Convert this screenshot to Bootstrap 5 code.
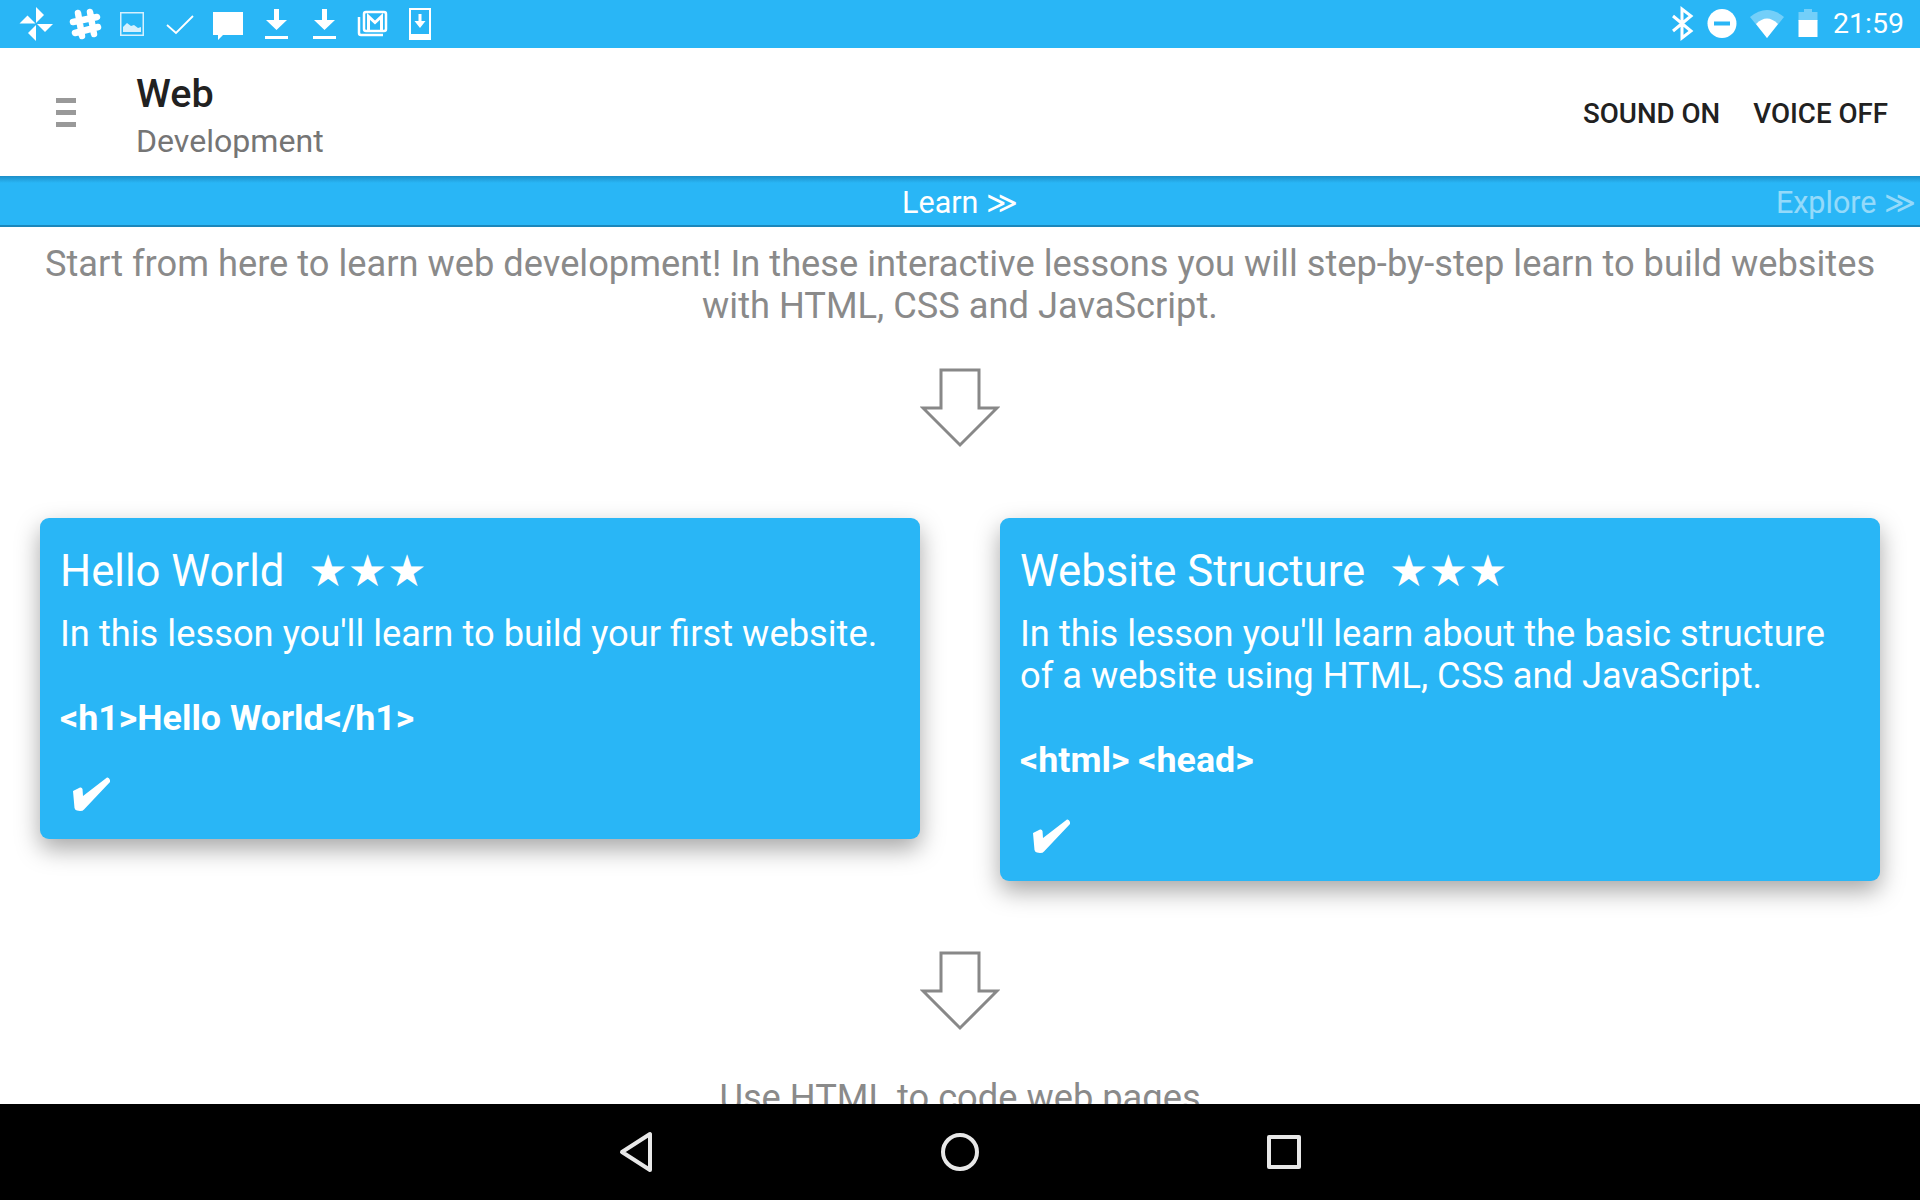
<!DOCTYPE html>
<html lang="en">
<head>
    <meta charset="UTF-8">
    <meta name="viewport" content="width=device-width, initial-scale=1.0">
    <title>Web Development</title>
    <link rel="stylesheet" href="https://cdn.jsdelivr.net/npm/bootstrap@5.3.0/dist/css/bootstrap.min.css">
    <style>
        html, body { height: 100%; overflow: hidden; }
        body { font-family: Roboto, "DejaVu Sans", sans-serif; background: #fff; }
        .app-shell { height: 1200px; }
        .status-bar { height: 48px; background: #29b6f6; color: #fff; padding: 0 16px 0 12px; }
        .status-bar svg { width: 48px; height: 48px; display: block; }
        .status-bar svg.sys-40 { width: 40px; }
        .status-bar svg.sys-50 { width: 50px; }
        .status-bar svg.sys-32 { width: 32px; }
        .status-time { font-size: 28.5px; line-height: 50px; margin-left: 9px; }
        .top-bar { height: 128px; padding: 10px 32px 0 56px; }
        .menu-bars { width: 20px; margin: -10px 60px 0 0; }
        .menu-bars span { display: block; height: 5px; background: #999; margin: 7px 0; }
        .top-title { font-size: 39.6px; font-weight: 500; color: #212121; line-height: 48px; }
        .top-sub { font-size: 32.1px; color: #757575; line-height: 47px; }
        .top-action { font-size: 27.7px; font-weight: 500; color: #212121; margin-left: 33px; margin-top: -7px; }
        .tab-strip { height: 51px; background: linear-gradient(#1e8fc8, #29b6f6 7px); color: #fff; font-size: 30.5px; line-height: 53px; border-bottom: 2px solid #1b87bb; }
        .tab-next { position: absolute; right: 4px; top: 0; opacity: .5; }
        .page-body { overflow: hidden; min-height: 0; }
        .intro-text { font-size: 36.25px; line-height: 42px; color: #8a8a8a; text-align: center; padding: 16px 30px 0; }
        .step-arrow { display: block; width: 80px; height: 80px; margin: 0 auto; }
        .step-arrow.first-arrow { margin-top: 41px; }
        .lesson-row { gap: 80px; padding: 0 40px; margin-top: 70px; margin-bottom: 70px; }
        .lesson-card { flex: 1 1 0; background: #29b6f6; color: #fff; border: 0; border-radius: 9px; padding: 24px 20px 28px; box-shadow: 0 10px 24px rgba(0,0,0,.35); }
        .lesson-title { font-size: 43.7px; line-height: 58px; font-weight: 400; margin: 0; }
        .lesson-stars { font-family: "DejaVu Sans", sans-serif; font-size: 44px; margin-left: 13px; }
        .lesson-text { font-size: 36.3px; line-height: 42px; font-weight: 400; margin: 13px 0 0; }
        .lesson-code { font-size: 35.8px; line-height: 42px; font-weight: 700; margin: 42px 0 0; }
        .lesson-done { display: block; width: 37px; height: 34px; margin: 38px 0 0 13px; }
        .next-step { padding-top: 46px; }
        .nav-strip { height: 96px; background: #000; gap: 254px; }
        .nav-strip svg { width: 70px; height: 70px; display: block; }
    </style>
</head>
<body>

<div class="app-shell d-flex flex-column">
    <div class="status-bar d-flex align-items-center flex-shrink-0">
        <svg viewBox="0 0 48 48" fill="#fff"><path d="M24 7l8 8-8 8zM41 24l-8 8-8-8zM24 41l-8-8 8-8zM7.500 23.500l8-8 8 8z"/></svg>
        <svg viewBox="0 0 48 48" stroke="#fff" stroke-width="6.500" stroke-linecap="round" fill="none"><path d="M18 13l4 23M30 12l4 22M13 22l24-5M15 33l23-6"/></svg>
        <svg viewBox="0 0 48 48" fill="#d6f0fd"><rect x="12.750" y="12.750" width="22.500" height="22.500" fill="none" stroke="#d6f0fd" stroke-width="1.500"/><path d="M15 32v-5l4-4 4 3 3-1 4 3 3-1v5z"/></svg>
        <svg viewBox="0 0 48 48" fill="none" stroke="#fff" stroke-width="1.800"><path d="M11 25l9 8 17-17"/></svg>
        <svg viewBox="0 0 48 48" fill="#fff"><path d="M9 12h30v23H19l-5 5v-5H9z"/></svg>
        <svg viewBox="0 0 48 48" fill="#fff"><path d="M22 9h5v11h8l-10.500 10L14 20h8zM13 36h23v3H13z"/></svg>
        <svg viewBox="0 0 48 48" fill="#fff"><path d="M22 9h5v11h8l-10.500 10L14 20h8zM13 36h23v3H13z"/></svg>
        <svg viewBox="0 0 48 48" fill="none" stroke="#fff" stroke-width="2.500"><rect x="16" y="12" width="22" height="19" rx="2"/><path d="M20.500 30V16.500l6.500 6 6.500-6V30" stroke-width="3"/><path d="M11 17v16a2 2 0 0 0 2 2h22"/></svg>
        <svg viewBox="0 0 48 48" fill="none" stroke="#fff" stroke-width="2"><path d="M14 9h20v30H14z"/><path d="M14 36h20" stroke-width="4"/><path d="M22.500 14h3v7h4l-5.500 7-5.500-7h4z" fill="#fff" stroke="none"/></svg>
        <div class="ms-auto d-flex align-items-center">
            <svg class="sys-40" viewBox="4 0 40 48" fill="none" stroke="#fff" stroke-width="3"><path d="M15 16l18 15-9 7V9l9 7-18 15"/></svg>
            <svg class="sys-40" viewBox="4 0 40 48"><circle cx="24" cy="23.500" r="14.500" fill="#fff"/><rect x="16" y="21.500" width="16" height="4" fill="#29b6f6"/></svg>
            <svg class="sys-50" viewBox="-1 0 50 48"><path d="M7 17Q24 3 41 17L24 38z" fill="#fff" opacity=".35"/><path d="M13 24Q24 13 35 24L24 38z" fill="#fff"/></svg>
            <svg class="sys-32" viewBox="8 0 32 48"><path d="M14.500 12H20V9h8v3h5.500v9h-19z" fill="#fff" opacity=".35"/><path d="M14.500 20h19v17h-19z" fill="#fff"/></svg>
            <span class="status-time">21:59</span>
        </div>
    </div>

    <div class="top-bar d-flex align-items-center bg-white flex-shrink-0">
        <div class="menu-bars"><span></span><span></span><span></span></div>
        <div>
            <div class="top-title">Web</div>
            <div class="top-sub">Development</div>
        </div>
        <div class="ms-auto d-flex">
            <span class="top-action">SOUND ON</span>
            <span class="top-action">VOICE OFF</span>
        </div>
    </div>

    <div class="tab-strip text-center position-relative flex-shrink-0">
        Learn ≫
        <span class="tab-next">Explore ≫</span>
    </div>

    <div class="page-body flex-grow-1">
        <p class="intro-text mb-0">Start from here to learn web development! In these interactive lessons you will step-by-step learn to build websites with HTML, CSS and JavaScript.</p>
        <svg class="step-arrow first-arrow" viewBox="0 0 80 80" fill="none" stroke="#888" stroke-width="3"><path d="M21 2h38v38h18L40 77 3 40h18z"/></svg>

        <div class="lesson-row d-flex align-items-start">
            <div class="card lesson-card">
                <h3 class="lesson-title">Hello World <span class="lesson-stars">★★★</span></h3>
                <p class="lesson-text">In this lesson you'll learn to build your first website.</p>
                <p class="lesson-code">&lt;h1&gt;Hello World&lt;/h1&gt;</p>
                <svg class="lesson-done" viewBox="0 0 37 34" fill="#fff"><path d="M0 14L7 10.500Q9 10 9.500 12L10 19 34 0.500Q36 0 37 3L37 5 11 32.500Q10 34 7 34L4 33.500Q2 33 1.500 31z"/></svg>
            </div>
            <div class="card lesson-card">
                <h3 class="lesson-title">Website Structure <span class="lesson-stars">★★★</span></h3>
                <p class="lesson-text">In this lesson you'll learn about the basic structure of a website using HTML, CSS and JavaScript.</p>
                <p class="lesson-code">&lt;html&gt; &lt;head&gt;</p>
                <svg class="lesson-done" viewBox="0 0 37 34" fill="#fff"><path d="M0 14L7 10.500Q9 10 9.500 12L10 19 34 0.500Q36 0 37 3L37 5 11 32.500Q10 34 7 34L4 33.500Q2 33 1.500 31z"/></svg>
            </div>
        </div>

        <svg class="step-arrow" viewBox="0 0 80 80" fill="none" stroke="#888" stroke-width="3"><path d="M21 2h38v38h18L40 77 3 40h18z"/></svg>
        <p class="intro-text next-step">Use HTML to code web pages</p>
    </div>

    <div class="nav-strip d-flex align-items-center justify-content-center flex-shrink-0">
        <svg viewBox="0 0 70 70" fill="none" stroke="#e8e8e8" stroke-width="4" stroke-linejoin="round"><path d="M49 17v36L21 35z"/></svg>
        <svg viewBox="0 0 70 70" fill="none" stroke="#e8e8e8" stroke-width="4"><circle cx="35" cy="35" r="17"/></svg>
        <svg viewBox="0 0 70 70" fill="none" stroke="#e8e8e8" stroke-width="4" stroke-linejoin="round"><rect x="20" y="20" width="30" height="30"/></svg>
    </div>
</div>

<script src="https://cdn.jsdelivr.net/npm/bootstrap@5.3.0/dist/js/bootstrap.bundle.min.js"></script>
</body>
</html>
